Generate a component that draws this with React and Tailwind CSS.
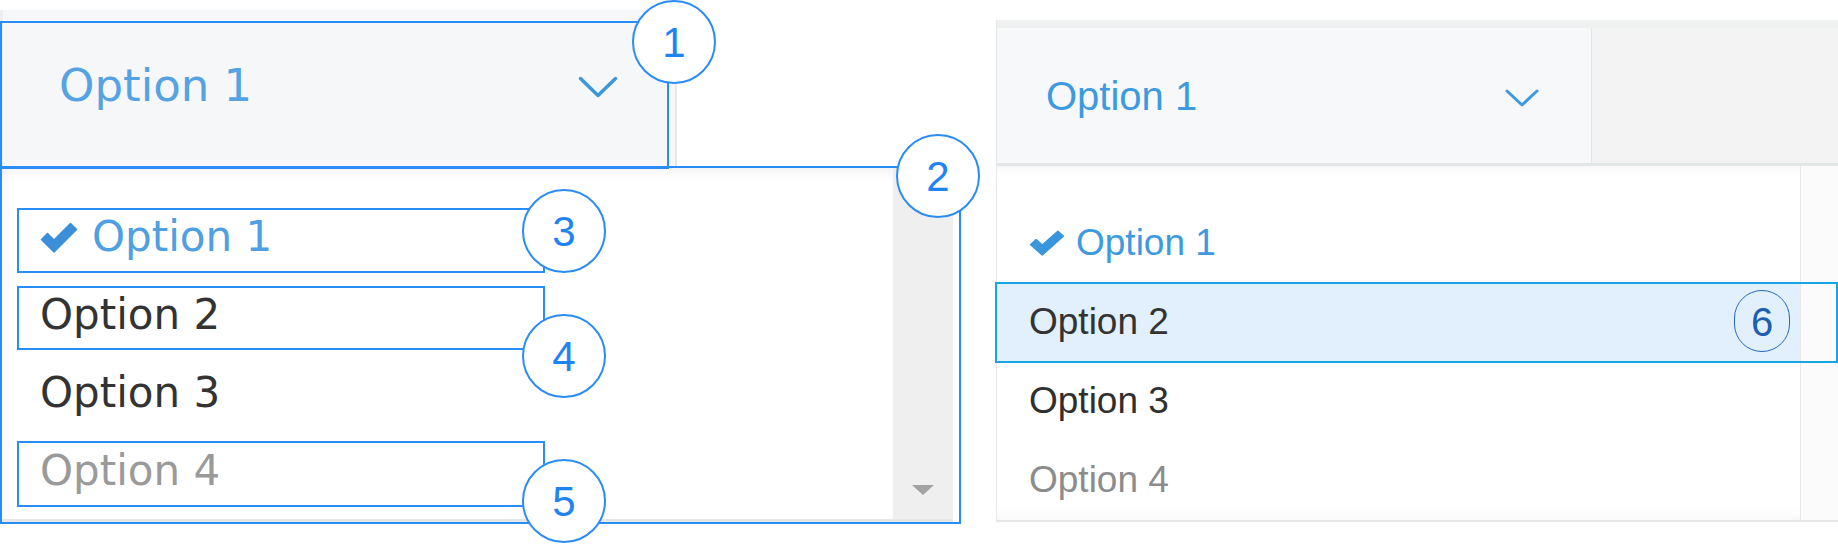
import React from "react";

const DV = { fontFamily: '"DejaVu Sans", Verdana, sans-serif' };
const LS = { fontFamily: '"Liberation Sans", Arial, Helvetica, sans-serif' };

function Check({ w, h, color }) {
  return (
    <svg width={w} height={h} viewBox="0 0 38 32" preserveAspectRatio="none">
      <path
        d="M1.5 18.5 L7.5 12.5 L14 19 L30.5 2.5 L36.5 8.5 L14 31 Z"
        fill={color}
        strokeLinejoin="round"
        stroke={color}
        strokeWidth="1.5"
      />
    </svg>
  );
}

function Chevron({ w, h, color, sw }) {
  return (
    <svg width={w} height={h} viewBox={`0 0 ${w} ${h}`} fill="none">
      <polyline
        points={`${sw} ${sw} ${w / 2} ${h - sw} ${w - sw} ${sw}`}
        stroke={color}
        strokeWidth={sw}
        strokeLinecap="round"
        strokeLinejoin="round"
      />
    </svg>
  );
}

function Badge({ n, className }) {
  return (
    <div
      className={
        "absolute w-[84px] h-[84px] rounded-full bg-white border-2 border-[#2a8cf7] flex items-center justify-center text-[42px] leading-none text-[#1f84f3] " +
        className
      }
      style={LS}
    >
      <span className="pt-[2px]">{n}</span>
    </div>
  );
}

export default function App() {
  return (
    <div className="relative w-[1838px] h-[544px] bg-white overflow-hidden flex">
      {/* LEFT PANEL */}
      <div className="w-[996px] flex flex-col" style={DV}>
        <div className="mt-[10px] w-[677px] h-[156px] bg-[#f6f7f9] border-l-[3px] border-[#eceef0] border-r-2 border-r-[#e6e8ea] flex items-center justify-between pl-[56px] pr-[56px] pb-[6px]">
          <span className="text-[45px] leading-none text-[#55a3e3]">Option 1</span>
          <span className="mt-[4px]">
            <Chevron w={42} h={24} color="#3d97dc" sw={3.5} />
          </span>
        </div>
        <div className="w-[953px] h-[356px] flex border-b-[3px] border-[#e6e6e6]">
          <div className="flex-1 bg-white shadow-[inset_0_14px_14px_-10px_rgba(0,0,0,0.07),inset_14px_0_14px_-12px_rgba(0,0,0,0.06)] pt-[32px] flex flex-col">
            <div className="h-[78px] flex items-center pl-[40px] gap-[14px] text-[42px] leading-none text-[#4fa0e2]">
              <Check w={38} h={32} color="#3b8fd9" />
              <span>Option 1</span>
            </div>
            <div className="h-[78px] flex items-center pl-[40px] text-[42px] leading-none text-[#333333]">
              Option 2
            </div>
            <div className="h-[78px] flex items-center pl-[40px] text-[42px] leading-none text-[#333333]">
              Option 3
            </div>
            <div className="h-[78px] flex items-center pl-[40px] text-[42px] leading-none text-[#9a9a9a]">
              Option 4
            </div>
          </div>
          <div className="w-[60px] bg-[#efefef] flex items-end justify-center pb-[24px]">
            <svg width="22" height="10" viewBox="0 0 22 10">
              <polygon points="0 0 22 0 11 10" fill="#a3a3a3" />
            </svg>
          </div>
        </div>
      </div>

      {/* RIGHT PANEL */}
      <div className="w-[842px] flex flex-col" style={LS}>
        <div className="mt-[20px] h-[8px] bg-[#eff1f1] border-l border-[#e4e6e6]" />
        <div className="h-[135px] flex">
          <div className="w-[596px] bg-[#f7f8fa] border-l border-r border-[#e4e6e6] flex items-center justify-between pl-[49px] pr-[51px]">
            <span className="text-[40px] leading-none text-[#3d9ae0]">Option 1</span>
            <span className="mt-[4px]">
              <Chevron w={36} h={20} color="#3d9ae0" sw={3} />
            </span>
          </div>
          <div className="flex-1 bg-[#f3f3f3]" />
        </div>
        <div className="h-[3px] bg-[#e3e6e6]" />
        <div className="h-[356px] flex border-b-2 border-[#e6e6e6]">
          <div className="w-[805px] border-l border-r border-[#e8e8e8] bg-white shadow-[inset_0_12px_12px_-10px_rgba(0,0,0,0.05),inset_0_-14px_14px_-12px_rgba(0,0,0,0.05)] pt-[37px] flex flex-col">
            <div className="h-[79px] flex items-center pl-[32px] gap-[11px] text-[37px] leading-none text-[#3d9ae0]">
              <Check w={36} h={27} color="#3a96dc" />
              <span>Option 1</span>
            </div>
            <div className="h-[79px] flex items-center pl-[32px] text-[37px] leading-none text-[#333333] bg-[#e1f0fc]">
              Option 2
            </div>
            <div className="h-[79px] flex items-center pl-[32px] text-[37px] leading-none text-[#2f2f2f]">
              Option 3
            </div>
            <div className="h-[79px] flex items-center pl-[32px] text-[37px] leading-none text-[#8c8c8c]">
              Option 4
            </div>
          </div>
          <div className="flex-1 bg-[#fbfbfb]" />
        </div>
      </div>

      {/* ANNOTATIONS */}
      <div className="absolute left-0 top-[21px] w-[669px] h-[148px] border-2 border-[#2a8cf7]" />
      <div className="absolute left-0 top-[166px] w-[961px] h-[358px] border-2 border-[#2a8cf7]" />
      <div className="absolute left-[17px] top-[208px] w-[528px] h-[65px] border-2 border-[#2a8cf7]" />
      <div className="absolute left-[17px] top-[286px] w-[528px] h-[64px] border-2 border-[#2a8cf7]" />
      <div className="absolute left-[17px] top-[441px] w-[528px] h-[66px] border-2 border-[#2a8cf7]" />
      <Badge n="1" className="left-[632px] top-[0px]" />
      <Badge n="2" className="left-[896px] top-[134px]" />
      <Badge n="3" className="left-[522px] top-[189px]" />
      <Badge n="4" className="left-[522px] top-[314px]" />
      <Badge n="5" className="left-[522px] top-[459px]" />

      <div className="absolute left-[995px] top-[282px] w-[843px] h-[81px] border-2 border-[#17a6e3]" />
      <div
        className="absolute left-[1734px] top-[290px] w-[56px] h-[62px] rounded-full border-[1.5px] border-[#2468bb] flex items-center justify-center text-[40px] leading-none text-[#1d5fae]"
        style={LS}
      >
        <span className="pt-[2px]">6</span>
      </div>
    </div>
  );
}
